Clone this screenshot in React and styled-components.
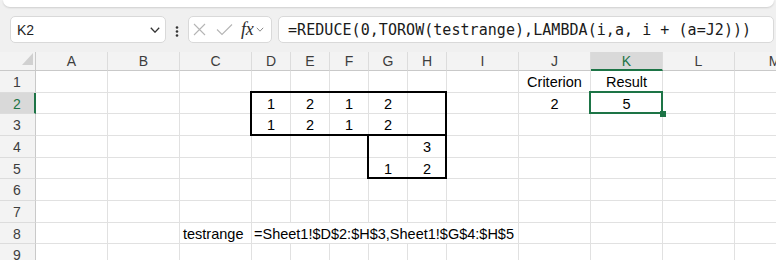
import React from 'react';
import styled, { createGlobalStyle, css } from 'styled-components';

const GREEN = '#1d7446';

const Global = createGlobalStyle`
  html, body { margin: 0; padding: 0; background: #f0f0f0; }
  body { width: 776px; height: 260px; overflow: hidden; font-family: "Liberation Sans", Arial, sans-serif; }
`;

const Page = styled.div`
  width: 776px;
  height: 260px;
  display: flex;
  flex-direction: column;
  background: #f0f0f0;
  overflow: hidden;
`;

const TopCard = styled.div`
  flex: none;
  height: 7px;
  margin: 0 2px 0 3px;
  background: #fff;
  border-radius: 0 0 8px 8px;
  box-shadow: 0 1px 2px rgba(0, 0, 0, 0.14);
`;

const Toolbar = styled.div`
  flex: none;
  height: 45px;
  display: flex;
  align-items: center;
  padding-left: 10px;
  box-sizing: border-box;
`;

const Box = styled.div`
  box-sizing: border-box;
  height: 27px;
  background: #fff;
  border: 1px solid #d9d9d9;
  border-radius: 5px;
  display: flex;
  align-items: center;
`;

const NameBox = styled(Box)`
  width: 156px;
  padding: 0 5px 0 6px;
  justify-content: space-between;
  font: 14px "Liberation Sans", Arial, sans-serif;
  color: #1f1f1f;
`;

const Grip = styled.div`
  width: 22px;
  display: flex;
  justify-content: center;
  align-items: center;
  padding-top: 3px;
`;

const FxBox = styled(Box)`
  width: 84px;
  padding-left: 4px;
`;

const IconSlot = styled.span`
  display: inline-flex;
  align-items: center;
  justify-content: center;
  width: ${(p) => p.$w}px;
  margin-right: ${(p) => p.$mr || 0}px;
`;

const Fx = styled.span`
  font: italic 18px "Liberation Serif", "Times New Roman", serif;
  color: #2b2b2b;
  letter-spacing: -0.3px;
  margin-right: 3px;
  line-height: 1;
  padding-bottom: 2px;
`;

const FormulaBox = styled(Box)`
  margin-left: 6px;
  width: 496px;
  padding-left: 9px;
  font: 15px "DejaVu Sans Mono", "Liberation Mono", monospace;
  color: #1a1a1a;
  white-space: nowrap;
  overflow: hidden;
  letter-spacing: 0.05px;
`;

const COLS = [
  { k: 'A', w: 72 }, { k: 'B', w: 72 }, { k: 'C', w: 72 },
  { k: 'D', w: 39 }, { k: 'E', w: 39 }, { k: 'F', w: 39 }, { k: 'G', w: 39 }, { k: 'H', w: 39 },
  { k: 'I', w: 72 }, { k: 'J', w: 72 }, { k: 'K', w: 72 }, { k: 'L', w: 72 }, { k: 'M', w: 80 },
];
const ROWS = [22, 21, 22, 22, 21, 22, 22, 21, 22];

const Sheet = styled.div`
  flex: none;
  display: grid;
  grid-template-columns: 36px ${COLS.map((c) => c.w + 'px').join(' ')};
  grid-template-rows: 19px ${ROWS.map((h) => h + 'px').join(' ')};
  background: #fff;
  width: max-content;
`;

const Corner = styled.div`
  box-sizing: border-box;
  background: #f3f3f3;
  border-right: 1px solid #c9c9c9;
  border-bottom: 1px solid #c9c9c9;
  display: flex;
  align-items: flex-end;
  justify-content: flex-end;
  padding: 0 2px 5px 0;
`;

const ColHead = styled.div`
  box-sizing: border-box;
  background: ${(p) => (p.$sel ? '#d9d9d9' : '#f3f3f3')};
  border-right: 1px solid #dcdcdc;
  border-bottom: ${(p) => (p.$sel ? `2px solid ${GREEN}` : '1px solid #c9c9c9')};
  color: ${(p) => (p.$sel ? GREEN : '#3d3d3d')};
  font: 14px "Liberation Sans", Arial, sans-serif;
  display: flex;
  align-items: center;
  justify-content: center;
  padding-top: ${(p) => (p.$sel ? 1 : 0)}px;
`;

const RowHead = styled.div`
  box-sizing: border-box;
  background: ${(p) => (p.$sel ? '#d9d9d9' : '#f3f3f3')};
  border-right: ${(p) => (p.$sel ? `2px solid ${GREEN}` : '1px solid #c9c9c9')};
  border-bottom: 1px solid #dcdcdc;
  color: ${(p) => (p.$sel ? GREEN : '#3d3d3d')};
  font: 14px "Liberation Sans", Arial, sans-serif;
  display: flex;
  align-items: center;
  justify-content: center;
  padding: 1px ${(p) => (p.$sel ? 0 : 1)}px 0 0;
`;

const Cell = styled.div`
  box-sizing: border-box;
  border-right: 1px solid #e1e1e1;
  border-bottom: 1px solid #e1e1e1;
  display: flex;
  align-items: center;
  justify-content: ${(p) => (p.$align === 'left' ? 'flex-start' : 'center')};
  padding: 1px ${(p) => (p.$align === 'left' ? 0 : 2)}px 0 ${(p) => (p.$align === 'left' ? p.$pl || 3 : 2)}px;
  font: 14.5px "Liberation Sans", Arial, sans-serif;
  color: #000;
  white-space: nowrap;
  grid-column: ${(p) => (p.$span ? `span ${p.$span}` : 'auto')};
  ${(p) =>
    (p.$edges || p.$selected) &&
    css`
      position: relative;
      &::after {
        content: '';
        position: absolute;
        top: -2px;
        left: -2px;
        right: -1px;
        bottom: -1px;
        pointer-events: none;
        border-style: solid;
        border-color: ${p.$selected ? GREEN : '#000'};
        border-width: ${p.$selected
          ? '2px'
          : ['t', 'r', 'b', 'l'].map((s) => (p.$edges.includes(s) ? '2px' : '0')).join(' ')};
      }
    `}
`;

const FillHandle = styled.span`
  position: absolute;
  right: -4px;
  bottom: -4px;
  width: 6px;
  height: 6px;
  background: ${GREEN};
  z-index: 2;
`;

const DATA = {
  J1: 'Criterion',
  K1: 'Result',
  D2: 1, E2: 2, F2: 1, G2: 2,
  J2: 2, K2: 5,
  D3: 1, E3: 2, F3: 1, G3: 2,
  H4: 3,
  G5: 1, H5: 2,
};

const EDGES = {
  D2: 'tl', E2: 't', F2: 't', G2: 't', H2: 'tr',
  D3: 'lb', E3: 'b', F3: 'b', G3: 'b', H3: 'rb',
  G4: 'l', H4: 'r',
  G5: 'lb', H5: 'rb',
};

const SELECTED = 'K2';

const Chevron = ({ w = 10, h = 6, color = '#333', sw = 1.3 }) => (
  <svg width={w} height={h} viewBox={`0 0 ${w} ${h}`}>
    <path d={`M0.8 0.8 L${w / 2} ${h - 0.8} L${w - 0.8} 0.8`} fill="none" stroke={color} strokeWidth={sw} />
  </svg>
);

const Dots = () => (
  <svg width="4" height="11" viewBox="0 0 4 11">
    <circle cx="2" cy="1.5" r="1.3" fill="#333" />
    <circle cx="2" cy="5.5" r="1.3" fill="#333" />
    <circle cx="2" cy="9.5" r="1.3" fill="#333" />
  </svg>
);

const Cross = () => (
  <svg width="13" height="13" viewBox="0 0 13 13">
    <path d="M1 1 L12 12 M12 1 L1 12" stroke="#b5b5b5" strokeWidth="1.1" fill="none" />
  </svg>
);

const Check = () => (
  <svg width="17" height="13" viewBox="0 0 17 13">
    <path d="M1 6.5 L6 11.5 L16 1.5" stroke="#b5b5b5" strokeWidth="1.1" fill="none" />
  </svg>
);

const Triangle = () => (
  <svg width="11" height="12" viewBox="0 0 11 12">
    <polygon points="11,0 11,12 0,12" fill="#d0d0d0" />
  </svg>
);

function renderRow(r) {
  const out = [];
  out.push(
    <RowHead key={`h${r}`} $sel={r === 2}>
      {r}
    </RowHead>
  );
  for (let i = 0; i < COLS.length; i++) {
    const c = COLS[i].k;
    const id = `${c}${r}`;
    if (r === 8 && c === 'C') {
      out.push(
        <Cell key={id} $align="left" $pl={3}>
          testrange
        </Cell>
      );
      continue;
    }
    if (r === 8 && c === 'D') {
      out.push(
        <Cell key={id} $align="left" $pl={2} $span={6}>
          =Sheet1!$D$2:$H$3,Sheet1!$G$4:$H$5
        </Cell>
      );
      i += 5;
      continue;
    }
    const sel = id === SELECTED;
    out.push(
      <Cell key={id} $edges={EDGES[id]} $selected={sel}>
        {DATA[id] ?? ''}
        {sel && <FillHandle />}
      </Cell>
    );
  }
  return out;
}

export default function App() {
  return (
    <>
      <Global />
      <Page>
        <TopCard />
        <Toolbar>
          <NameBox>
            <span>K2</span>
            <Chevron />
          </NameBox>
          <Grip>
            <Dots />
          </Grip>
          <FxBox>
            <IconSlot $w={13} $mr={10}>
              <Cross />
            </IconSlot>
            <IconSlot $w={17} $mr={8}>
              <Check />
            </IconSlot>
            <Fx>fx</Fx>
            <IconSlot $w={8}>
              <Chevron w={8} h={5} color="#8a8a8a" sw={1} />
            </IconSlot>
          </FxBox>
          <FormulaBox>=REDUCE(0,TOROW(testrange),LAMBDA(i,a, i + (a=J2)))</FormulaBox>
        </Toolbar>
        <Sheet>
          <Corner>
            <Triangle />
          </Corner>
          {COLS.map((c) => (
            <ColHead key={c.k} $sel={c.k === 'K'}>
              {c.k}
            </ColHead>
          ))}
          {ROWS.map((_, i) => renderRow(i + 1))}
        </Sheet>
      </Page>
    </>
  );
}
